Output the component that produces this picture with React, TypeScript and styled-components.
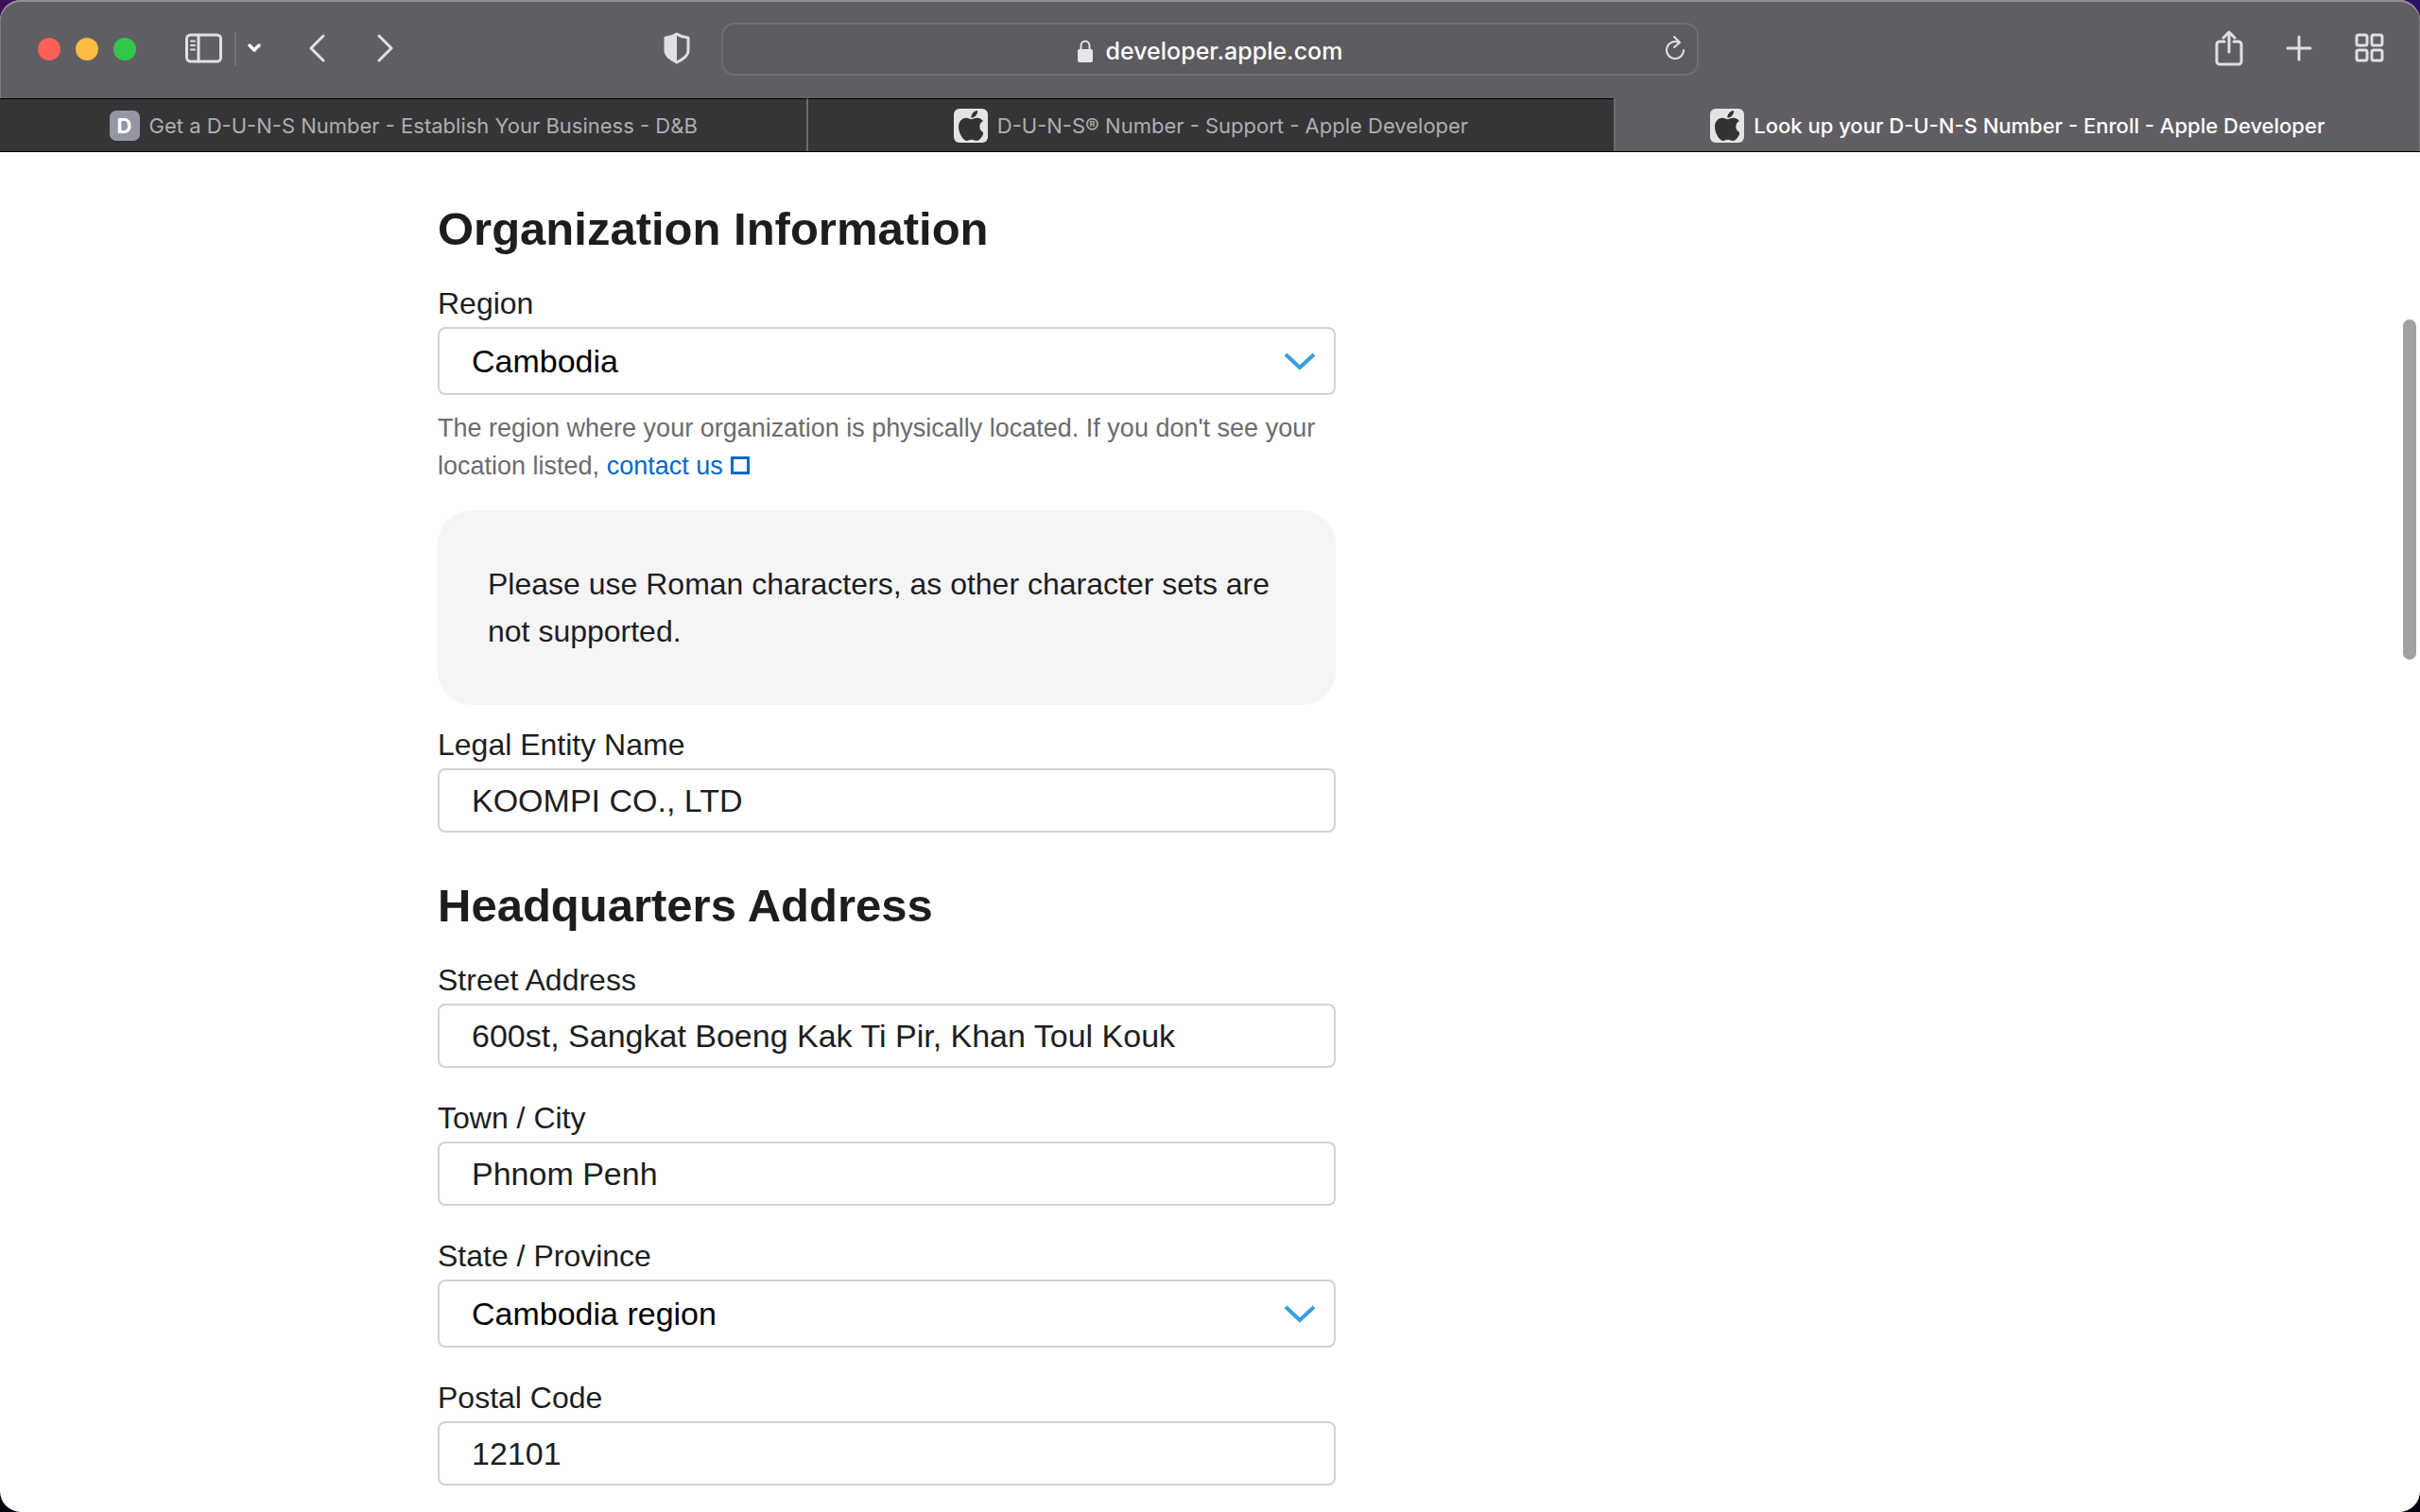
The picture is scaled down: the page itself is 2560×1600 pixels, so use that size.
import React from "react";
import styled, { createGlobalStyle } from "styled-components";

const uiFont = `Inter, Roboto, sans-serif`;
const pageFont = `"Liberation Sans", Arial, sans-serif`;

const GlobalStyle = createGlobalStyle`
  *, *::before, *::after { box-sizing: border-box; }
  body { margin: 0; background: linear-gradient(90deg, #3a1159, #2a1266) top / 100% 60px no-repeat, #05010f; }
  h2, p { margin: 0; }
`;

const Window = styled.div`
  position: relative;
  display: flex;
  flex-direction: column;
  height: 100vh;
  overflow: hidden;
  border-radius: 22px;
  background: #fff;
`;

const Chrome = styled.header`
  flex: none;
  background: #605e63;
  border-bottom: 1px solid #000;
  box-shadow: inset 0 2px 0 #929096, inset 1px 0 0 #7c7a7f, inset -1px 0 0 #7c7a7f;
  border-radius: 22px 22px 0 0;
  font-family: ${uiFont};
`;

const Toolbar = styled.div`
  display: grid;
  grid-template-columns: 1fr minmax(0, 1034px) 1fr;
  align-items: center;
  height: 104px;
`;

const Leading = styled.div`
  display: flex;
  align-items: center;
  padding: 0 33px 0 40px;
`;

const Lights = styled.div`
  display: flex;
  gap: 16px;
  margin-right: 52px;
`;

const Light = styled.button<{ $color: string }>`
  width: 24px;
  height: 24px;
  padding: 0;
  border: 0;
  border-radius: 50%;
  background: ${(p) => p.$color};
`;

const IconButton = styled.button`
  display: flex;
  align-items: center;
  justify-content: center;
  padding: 0 0 2px;
  border: 0;
  background: none;
  color: #e1dfe4;

  svg { display: block; fill: none; stroke: currentColor; stroke-width: 3; stroke-linecap: round; stroke-linejoin: round; }
`;

const SidebarGroup = styled.div`
  display: flex;
  align-items: center;
  gap: 12px;
`;

const Divider = styled.span`
  width: 2px;
  height: 36px;
  background: #737177;
`;

const History = styled.div`
  display: flex;
  gap: 53px;
  margin-left: 51px;
`;

const ShieldButton = styled(IconButton)`
  margin-left: auto;
`;

const AddressBar = styled.div`
  display: grid;
  grid-template-columns: 1fr auto 1fr;
  align-items: center;
  height: 56px;
  padding: 0 12px;
  border: 2px solid #706e74;
  border-radius: 14px;
  background: #5d5b60;
`;

const Address = styled.label`
  grid-column: 2;
  display: flex;
  align-items: center;
  gap: 14px;
  padding-top: 4px;
`;

const AddressInput = styled.input`
  field-sizing: content;
  padding: 0;
  border: 0;
  outline: 0;
  background: none;
  color: #fff;
  font: 500 25px/32px ${uiFont};
`;

const ReloadButton = styled(IconButton)`
  justify-self: end;
`;

const Trailing = styled.div`
  display: flex;
  align-items: center;
  justify-content: flex-end;
  gap: 45px;
  padding-right: 37px;
`;

const Tabs = styled.nav`
  display: grid;
  grid-template-columns: repeat(3, 1fr);
`;

const Tab = styled.button<{ $active?: boolean }>`
  display: flex;
  align-items: center;
  justify-content: center;
  gap: 10px;
  height: 56px;
  padding: 0 12px;
  border: 0;
  border-top: 1px solid ${(p) => (p.$active ? "transparent" : "#000")};
  background: ${(p) => (p.$active ? "transparent" : "#353537")};
  color: ${(p) => (p.$active ? "#fff" : "#aeaeb0")};
  font: ${(p) => (p.$active ? 500 : 400)} 22px/28px ${uiFont};
  white-space: nowrap;

  & + & { border-left: 2px solid #6b6b6e; }
`;

const LetterIcon = styled.span`
  display: grid;
  place-items: center;
  width: 32px;
  height: 32px;
  border-radius: 7px;
  background: #9496a4;
  color: #fff;
  font-weight: 700;
`;

const AppleTile = styled.span`
  display: grid;
  place-items: center;
  width: 36px;
  height: 36px;
  border-radius: 6px;
  background: #e4e4e4;
`;

const Page = styled.main`
  flex: 1;
  min-height: 0;
  overflow: hidden;
  padding-top: 51px;
  font-family: ${pageFont};
  color: #1d1d1f;
`;

const Container = styled.div`
  max-width: 1634px;
  margin: 0 auto;
`;

const Form = styled.form`
  max-width: 950px;
`;

const Section = styled.section`
  & + & { margin-top: 47px; }
`;

const Heading = styled.h2`
  margin-bottom: 24px;
  font-size: 49px;
  font-weight: 700;
  line-height: 60px;
`;

const Field = styled.div`
  & + & { margin-top: 28px; }
`;

const Label = styled.label`
  display: block;
  font-size: 32px;
  line-height: 50px;
`;

const TextInput = styled.input`
  display: block;
  width: 100%;
  height: 68px;
  padding: 0 34px;
  border: 2px solid #d2d2d7;
  border-radius: 8px;
  background: #fff;
  color: #1d1d1f;
  font: 34px/40px ${pageFont};
`;

const SelectBox = styled.div`
  display: grid;
  align-items: center;

  > * { grid-area: 1 / 1; }
  svg { justify-self: end; margin-right: 21px; pointer-events: none; }
`;

const Select = styled.select`
  appearance: none;
  width: 100%;
  height: 72px;
  padding: 0 80px 0 34px;
  border: 2px solid #d2d2d7;
  border-radius: 8px;
  background: #fff;
  color: #000;
  font: 34px/40px ${pageFont};
`;

const Hint = styled.p`
  margin-top: 15px;
  color: #6b6b6e;
  font-size: 27px;
  line-height: 40px;
`;

const Link = styled.a`
  color: #0668cc;
  text-decoration: none;
`;

const LinkMark = styled.span`
  display: inline-block;
  width: 20px;
  height: 19px;
  margin-left: 8px;
  border: 3px solid currentColor;
`;

const Notice = styled.p`
  margin: 27px 0 17px;
  padding: 53px;
  border-radius: 36px;
  background: #f5f5f7;
  font-size: 32px;
  line-height: 50px;
`;

const Thumb = styled.div`
  position: absolute;
  top: 338px;
  right: 4px;
  width: 14px;
  height: 360px;
  border-radius: 7px;
  background: #a1a1a1;
`;

const AppleIcon = () => (
  <AppleTile>
    <svg width="26" height="32" viewBox="4 32 366 448" fill="#333" aria-hidden="true">
      <path d="M318.7 268.7c-.2-36.7 16.4-64.4 50-84.8-18.8-26.9-47.2-41.7-84.7-44.6-35.5-2.8-74.3 20.7-88.5 20.7-15 0-49.4-19.7-76.4-19.7C63.3 141.2 4 184.8 4 273.5q0 39.3 14.4 81.2c12.8 36.7 59 126.7 107.2 125.2 25.2-.6 43-17.9 75.8-17.9 31.8 0 48.3 17.9 76.4 17.9 48.6-.7 90.4-82.5 102.6-119.3-65.2-30.7-61.7-90-61.7-91.9zm-56.6-164.2c27.3-32.4 24.8-61.9 24-72.5-24.1 1.4-52 16.4-67.9 34.9-17.5 19.8-27.8 44.3-25.6 71.9 26.1 2 49.9-11.4 69.5-34.3z" />
    </svg>
  </AppleTile>
);

function TextField({ id, label, value }: { id: string; label: string; value: string }) {
  return (
    <Field>
      <Label htmlFor={id}>{label}</Label>
      <TextInput id={id} type="text" defaultValue={value} />
    </Field>
  );
}

function SelectField({ id, label, value, children }: { id: string; label: string; value: string; children?: React.ReactNode }) {
  return (
    <Field>
      <Label htmlFor={id}>{label}</Label>
      <SelectBox>
        <Select id={id} defaultValue={value}>
          <option>{value}</option>
        </Select>
        <svg width="34" height="20" viewBox="0 0 34 20" fill="none" stroke="#38a0dc" strokeWidth="4" aria-hidden="true">
          <path d="M2 3l15 14L32 3" />
        </svg>
      </SelectBox>
      {children}
    </Field>
  );
}

export default function App() {
  return (
    <>
      <GlobalStyle />
      <Window>
        <Chrome>
          <Toolbar>
            <Leading>
              <Lights>
                <Light $color="#ff5f57" aria-label="Close" />
                <Light $color="#febc40" aria-label="Minimize" />
                <Light $color="#33c748" aria-label="Zoom" />
              </Lights>
              <SidebarGroup>
                <IconButton aria-label="Show sidebar">
                  <svg width="40" height="32" viewBox="0 0 40 32">
                    <rect x="1.500" y="2" width="36" height="28" rx="4" />
                    <path d="M14 2v28" />
                    <path d="M6 8.500h4M6 13h4M6 17.500h4" strokeWidth="2" />
                  </svg>
                </IconButton>
                <Divider />
                <IconButton aria-label="Tab groups">
                  <svg width="14" height="10" viewBox="0 0 14 10">
                    <path d="M2 2l5 5 5-5" stroke="#fff" strokeWidth="3.500" />
                  </svg>
                </IconButton>
              </SidebarGroup>
              <History>
                <IconButton aria-label="Back">
                  <svg width="18" height="30" viewBox="0 0 18 30"><path d="M15 2L2 15l13 13" /></svg>
                </IconButton>
                <IconButton aria-label="Forward">
                  <svg width="18" height="30" viewBox="0 0 18 30"><path d="M3 2l13 13L3 28" /></svg>
                </IconButton>
              </History>
              <ShieldButton aria-label="Privacy report">
                <svg width="28" height="34" viewBox="0 0 28 34">
                  <path d="M14 2C11 4 6 5.500 2 6v14c0 5 6 9 12 12 6-3 12-7 12-12V6c-4-.5-9-2-12-4z" />
                  <path d="M14 2C11 4 6 5.500 2 6v14c0 5 6 9 12 12z" fill="currentColor" stroke="none" />
                </svg>
              </ShieldButton>
            </Leading>
            <AddressBar>
              <Address>
                <svg width="16" height="24" viewBox="0 0 16 24" fill="#e6e5e8" aria-hidden="true">
                  <rect y="10" width="16" height="14" rx="2" />
                  <path d="M3.500 11V6.500a4.500 5 0 019 0V11" fill="none" stroke="#e6e5e8" strokeWidth="2" />
                </svg>
                <AddressInput aria-label="Address" defaultValue="developer.apple.com" />
              </Address>
              <ReloadButton aria-label="Reload">
                <svg width="22" height="28" viewBox="0 0 22 28">
                  <path d="M20 16a9 9 0 11-6-8.500M10 2l6 6-6 5" strokeWidth="2" />
                </svg>
              </ReloadButton>
            </AddressBar>
            <Trailing>
              <IconButton aria-label="Share">
                <svg width="30" height="40" viewBox="0 0 30 40">
                  <path d="M10 13H5a3 3 0 00-3 3v18a3 3 0 003 3h20a3 3 0 003-3V16a3 3 0 00-3-3h-5M15 24V3M9 9l6-6 6 6" />
                </svg>
              </IconButton>
              <IconButton aria-label="New tab">
                <svg width="28" height="28" viewBox="0 0 28 28"><path d="M14 2v24M2 14h24" /></svg>
              </IconButton>
              <IconButton aria-label="Tab overview">
                <svg width="32" height="32" viewBox="0 0 32 32">
                  <rect x="2" y="2" width="11" height="11" rx="2" />
                  <rect x="18" y="2" width="11" height="11" rx="2" />
                  <rect x="2" y="18" width="11" height="11" rx="2" />
                  <rect x="18" y="18" width="11" height="11" rx="2" />
                </svg>
              </IconButton>
            </Trailing>
          </Toolbar>
          <Tabs>
            <Tab><LetterIcon>D</LetterIcon>Get a D-U-N-S Number - Establish Your Business - D&amp;B</Tab>
            <Tab><AppleIcon />D-U-N-S® Number - Support - Apple Developer</Tab>
            <Tab $active><AppleIcon />Look up your D-U-N-S Number - Enroll - Apple Developer</Tab>
          </Tabs>
        </Chrome>
        <Page>
          <Container>
            <Form>
              <Section>
                <Heading>Organization Information</Heading>
                <SelectField id="region" label="Region" value="Cambodia">
                  <Hint>
                    The region where your organization is physically located. If you don't see your location listed,{" "}
                    <Link href="#contact">contact us<LinkMark /></Link>
                  </Hint>
                </SelectField>
                <Notice>Please use Roman characters, as other character sets are not supported.</Notice>
                <TextField id="entity" label="Legal Entity Name" value="KOOMPI CO., LTD" />
              </Section>
              <Section>
                <Heading>Headquarters Address</Heading>
                <TextField id="street" label="Street Address" value="600st, Sangkat Boeng Kak Ti Pir, Khan Toul Kouk" />
                <TextField id="city" label="Town / City" value="Phnom Penh" />
                <SelectField id="state" label="State / Province" value="Cambodia region" />
                <TextField id="postal" label="Postal Code" value="12101" />
              </Section>
            </Form>
          </Container>
        </Page>
        <Thumb />
      </Window>
    </>
  );
}
